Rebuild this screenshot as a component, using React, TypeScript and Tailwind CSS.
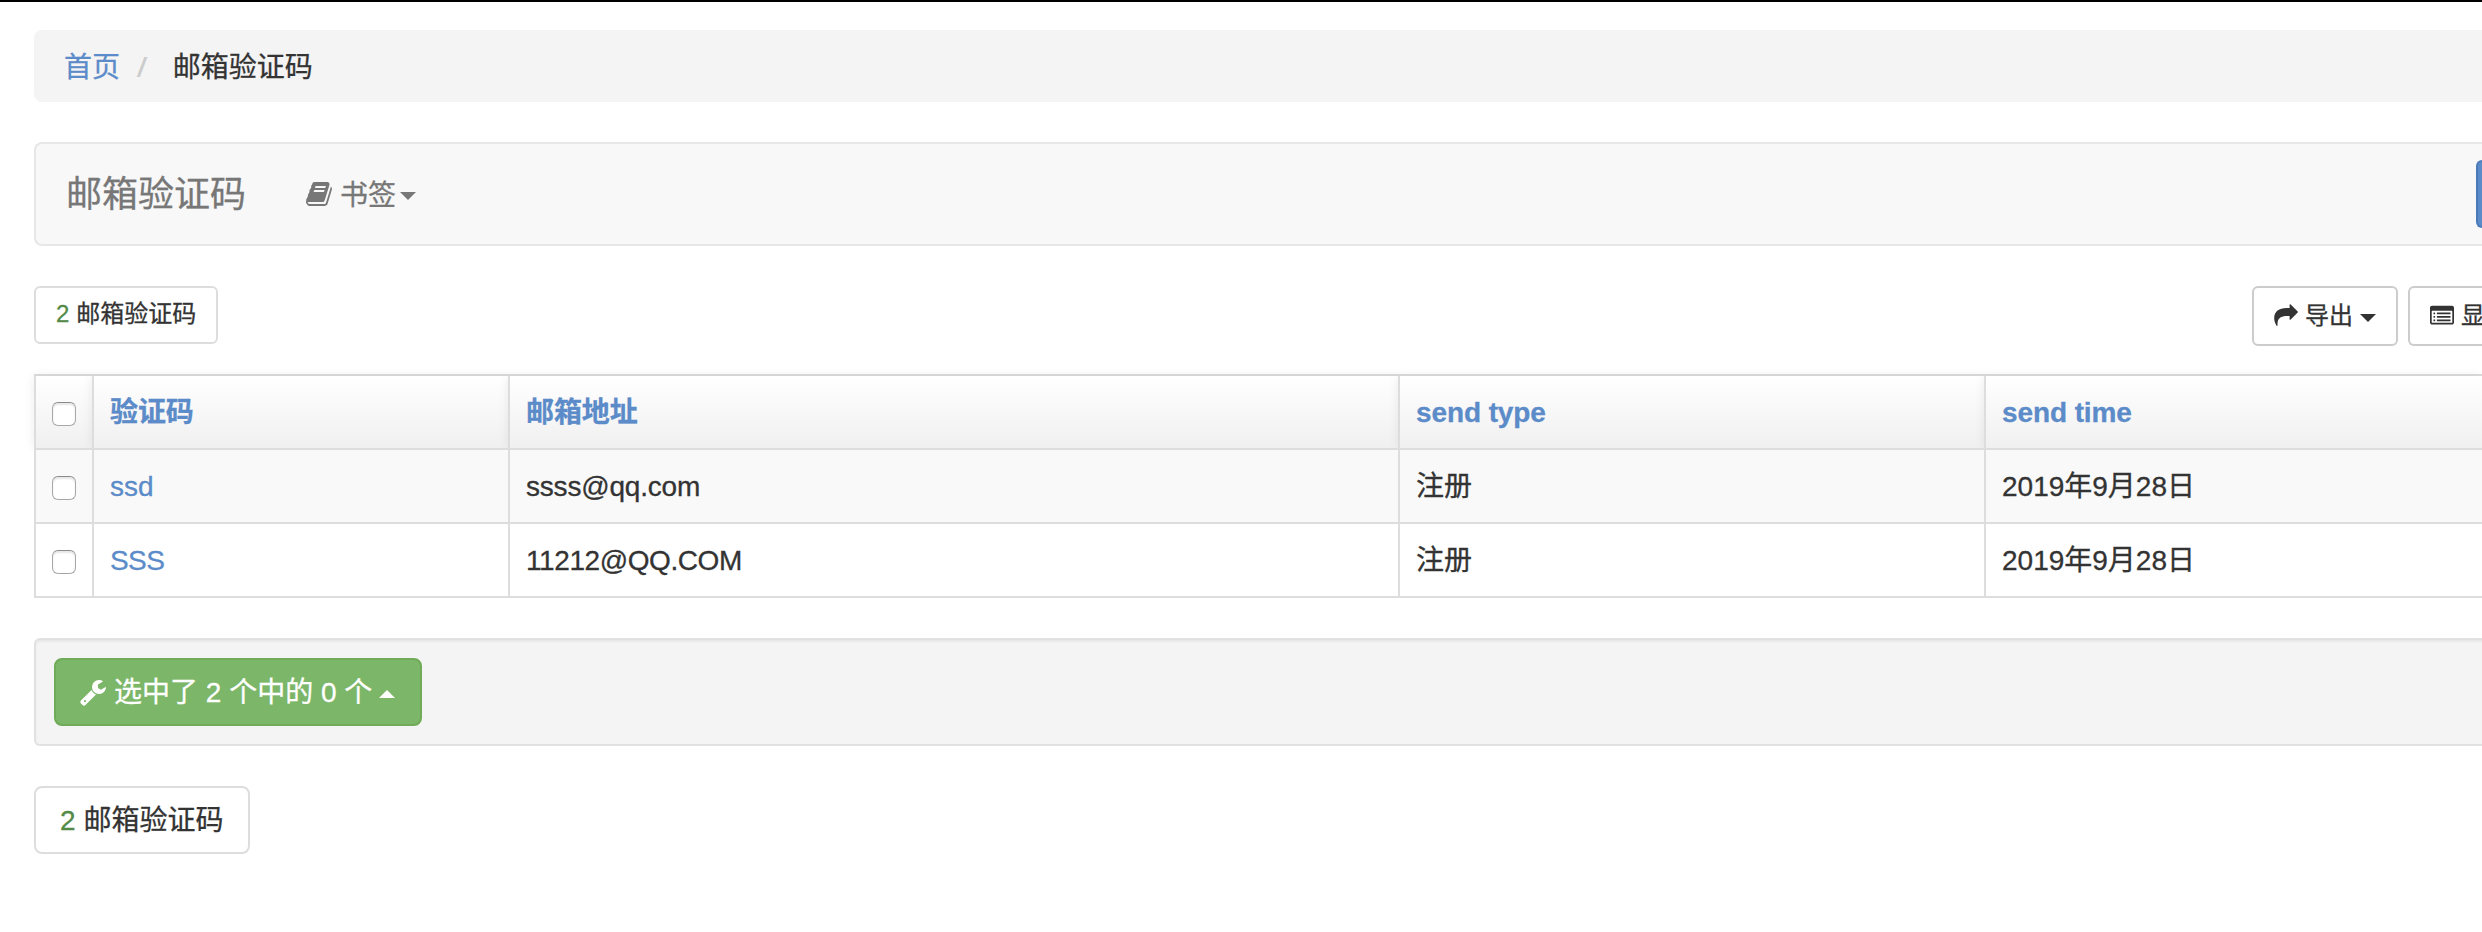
import type { ReactNode } from "react";

const iconPaths = {
  book: "M1639 478q40 57 18 129l-275 906q-19 64-76.5 107.5t-122.5 43.5h-923q-77 0-148.5-53.5t-99.5-131.5q-24-67-2-127 0-4 3-27t4-37q1-8-3-21.5t-3-19.5q2-11 8-21t16.5-23.5 16.5-23.5q23-38 45-91.5t30-91.5q3-10 .5-30t-.5-28q3-11 17-28t17-23q21-36 42-92t25-90q1-9-2.5-32t.5-28q4-13 22-30.5t22-22.5q19-26 42.5-84.5t27.5-96.5q1-8-3-25.5t-2-26.5q2-8 9-18t18-23 17-21q8-12 16.5-30.5t15-35 16-36 19.5-32 26.5-23.5 36-11.5 47.5 5.5l-1 3q38-9 51-9h761q74 0 114 56t18 130l-274 906q-36 119-71.5 153.5t-128.5 34.5h-869q-27 0-38 15-11 16-1 43 24 70 144 70h923q29 0 56-15.5t35-41.5l300-987q7-22 5-57 38 15 59 43zm-1064 2q-4 13 2 22.5t20 9.5h608q13 0 25.5-9.5t16.5-22.5l21-64q4-13-2-22.5t-20-9.5h-608q-13 0-25.5 9.5t-16.5 22.5zm-83 256q-4 13 2 22.5t20 9.5h608q13 0 25.5-9.5t16.5-22.5l21-64q4-13-2-22.5t-20-9.5h-608q-13 0-25.5 9.5t-16.5 22.5z",
  list: "M384 1184v64q0 13-9.5 22.5t-22.5 9.5h-64q-13 0-22.5-9.5t-9.5-22.5v-64q0-13 9.5-22.5t22.5-9.5h64q13 0 22.5 9.5t9.5 22.5zm0-256v64q0 13-9.5 22.5t-22.5 9.5h-64q-13 0-22.5-9.5t-9.5-22.5v-64q0-13 9.5-22.5t22.5-9.5h64q13 0 22.5 9.5t9.5 22.5zm0-256v64q0 13-9.5 22.5t-22.5 9.5h-64q-13 0-22.5-9.5t-9.5-22.5v-64q0-13 9.5-22.5t22.5-9.5h64q13 0 22.5 9.5t9.5 22.5zm1152 512v64q0 13-9.5 22.5t-22.5 9.5h-960q-13 0-22.5-9.5t-9.5-22.5v-64q0-13 9.5-22.5t22.5-9.5h960q13 0 22.5 9.5t9.5 22.5zm0-256v64q0 13-9.5 22.5t-22.5 9.5h-960q-13 0-22.5-9.5t-9.5-22.5v-64q0-13 9.5-22.5t22.5-9.5h960q13 0 22.5 9.5t9.5 22.5zm0-256v64q0 13-9.5 22.5t-22.5 9.5h-960q-13 0-22.5-9.5t-9.5-22.5v-64q0-13 9.5-22.5t22.5-9.5h960q13 0 22.5 9.5t9.5 22.5zm128 704v-832q0-13-9.5-22.5t-22.5-9.5h-1472q-13 0-22.5 9.5t-9.5 22.5v832q0 13 9.5 22.5t22.5 9.5h1472q13 0 22.5-9.5t9.5-22.5zm128-1088v1088q0 66-47 113t-113 47h-1472q-66 0-113-47t-47-113v-1088q0-66 47-113t113-47h1472q66 0 113 47t47 113z",
  wrench: "M448 1472q0-26-19-45t-45-19-45 19-19 45 19 45 45 19 45-19 19-45zm644-420l-682 682q-37 37-90 37-52 0-91-37l-106-108q-38-36-38-90 0-53 38-91l681-681q39 98 114.5 173.5t173.5 114.5zm634-435q0 39-23 106-47 134-164.5 217.5t-258.5 83.5q-185 0-316.5-131.5t-131.5-316.5 131.5-316.5 316.5-131.5q58 0 121.5 16.5t107.5 46.5q16 11 16 28t-16 28l-293 169v224l193 107q5-3 79-48.5t135.5-81 70.5-35.5q15 0 23.5 10t8.5 25z",
};

function Icon({ name, className }: { name: keyof typeof iconPaths; className: string }) {
  return (
    <svg viewBox="0 0 1792 1792" fill="currentColor" className={`shrink-0 overflow-visible ${className}`}>
      <path d={iconPaths[name]} />
    </svg>
  );
}

function ShareIcon() {
  return (
    <svg viewBox="0 0 24 22" fill="currentColor" className="mb-[2px] h-[22px] w-6 shrink-0">
      <path d="M15.6 0.6Q16 -0.2 16.7 0.5L23.7 7.4Q24.2 8 23.7 8.6L16.7 15.5Q16 16.2 15.6 15.4V12C9 11.7 4.3 12.6 3.6 18.5C3.5 19.6 3.5 20.6 3.6 21.5Q3.1 22.3 2.4 21.6C0.9 18.7 0.2 16.6 0.2 14.2C0.2 7.2 5 4.1 12.5 4H15.6Z" />
    </svg>
  );
}

function Caret({ up = false, className = "" }: { up?: boolean; className?: string }) {
  return (
    <svg viewBox="0 0 16 8" fill="currentColor" className={`h-2 w-4 shrink-0 ${className}`}>
      <path d={up ? "M0 8L8 0L16 8Z" : "M0 0H16L8 8Z"} />
    </svg>
  );
}

function Checkbox() {
  return (
    <span
      role="checkbox"
      aria-checked="false"
      className="mt-1 h-6 w-6 rounded-[6px] border border-[#a8a8a8] border-t-[#8c8c8c] bg-white shadow-[inset_0_2px_2px_rgba(0,0,0,0.10)]"
    />
  );
}

const columns = ["w-[58px] justify-center", "w-[416px] pl-4", "w-[890px] pl-4", "w-[586px] pl-4", "flex-1 pl-4"];

function HeadCell({ col, children }: { col: number; children: ReactNode }) {
  return (
    <div
      className={`flex h-full shrink-0 items-center border-l-2 border-[#dddddd] bg-gradient-to-b from-white to-[#f0f0f0] bg-clip-padding font-bold tracking-[-0.1px] text-[#5b8bc8] shadow-[0_0_10px_rgba(0,0,0,0.08)] ${columns[col]}`}
    >
      {children}
    </div>
  );
}

function Cell({ col, link = false, children }: { col: number; link?: boolean; children: ReactNode }) {
  return (
    <div
      className={`flex h-full shrink-0 items-center border-l-2 border-[#dddddd] ${link ? "text-[#5b8bc8]" : ""} ${columns[col]}`}
    >
      {children}
    </div>
  );
}

const rows = [
  { code: "ssd", email: "ssss@qq.com", type: "注册", time: "2019年9月28日", codeTracking: "", emailTracking: "tracking-[-0.2px]" },
  { code: "SSS", email: "11212@QQ.COM", type: "注册", time: "2019年9月28日", codeTracking: "tracking-[-0.6px]", emailTracking: "tracking-[-0.42px]" },
];

export default function App() {
  return (
    <div className="h-[932px] w-full overflow-hidden border-t-2 border-black bg-white pl-[34px] pt-7 font-['Liberation_Sans','Noto_Sans_CJK_SC',sans-serif] text-[28px] leading-10 whitespace-nowrap text-[#333333] [-webkit-text-stroke:0.3px]">
      <nav className="flex h-[72px] items-center rounded-l-lg bg-[#f4f4f4] pt-[3px] pl-[30px]">
        <a className="text-[#5b8bc8]">首页</a>
        <span className="ml-[18px] inline-block scale-x-[1.35] text-[#cccccc] [-webkit-text-stroke:0]">/</span>
        <span className="pl-[27px]">邮箱验证码</span>
      </nav>

      <header className="mt-10 flex h-[104px] items-center rounded-l-lg border-2 border-r-0 border-[#e7e7e7] bg-[#f8f8f8] pl-[30px] text-[#777777]">
        <h1 className="w-[180px] pt-[2px] text-[36px]">邮箱验证码</h1>
        <div className="flex items-center pl-[60px]">
          <Icon name="book" className="h-7 w-7" />
          <span className="pt-[3px] pl-[6px]">书签</span>
          <Caret className="mt-1 ml-1" />
        </div>
        <div className="ml-auto h-[68px] w-[6px] rounded-l-lg border-2 border-r-0 border-[#4a7ab8] bg-[#5b8bc8]" />
      </header>

      <div className="mt-10 flex h-[60px] items-start justify-between text-2xl">
        <div className="flex h-[58px] items-center gap-[7px] rounded-md border-2 border-[#dddddd] px-5 pb-[2px]">
          <span className="text-[#548a47]">2</span>
          <span>邮箱验证码</span>
        </div>
        <div className="flex gap-[10px]">
          <div className="flex h-[60px] w-[146px] items-center rounded-md border-2 border-[#cccccc] pl-5">
            <ShareIcon />
            <span className="pl-[7px]">导出</span>
            <Caret className="mt-1 ml-[7px]" />
          </div>
          <div className="flex h-[60px] w-[74px] items-center overflow-hidden rounded-l-md border-2 border-r-0 border-[#cccccc] pl-5">
            <Icon name="list" className="h-6 w-6" />
            <span className="pl-[7px]">显</span>
          </div>
        </div>
      </div>

      <div className="mt-7 flex flex-col border-b-2 border-[#dddddd]">
        <div className="flex h-[74px] border-t-2 border-[#dddddd]">
          <HeadCell col={0}><Checkbox /></HeadCell>
          <HeadCell col={1}><span className="pt-[2px]">验证码</span></HeadCell>
          <HeadCell col={2}><span className="pt-[2px]">邮箱地址</span></HeadCell>
          <HeadCell col={3}><span className="pt-[2px]">send type</span></HeadCell>
          <HeadCell col={4}><span className="pt-[2px]">send time</span></HeadCell>
        </div>
        {rows.map((row, i) => (
          <div
            key={row.code}
            className={`relative flex h-[74px] border-t-2 border-[#dddddd] ${i % 2 === 0 ? "bg-[#f9f9f9]" : "bg-white"}`}
          >
            <Cell col={0}><Checkbox /></Cell>
            <Cell col={1} link><span className={`pt-[2px] ${row.codeTracking}`}>{row.code}</span></Cell>
            <Cell col={2}><span className={`pt-[2px] ${row.emailTracking}`}>{row.email}</span></Cell>
            <Cell col={3}><span className="pt-[2px]">{row.type}</span></Cell>
            <Cell col={4}><span className="pt-[2px]">{row.time}</span></Cell>
          </div>
        ))}
      </div>

      <div className="mt-10 -mr-2 flex h-[108px] items-center rounded-l-md border-2 border-r-0 border-[#e1e1e1] bg-[#f4f4f4] pl-[18px] shadow-[inset_0_2px_2px_rgba(0,0,0,0.05)]">
        <button className="flex h-[68px] w-[368px] items-center rounded-lg border-2 border-[#6fab58] bg-[#7cb668] pl-[23px] text-white">
          <Icon name="wrench" className="h-7 w-7" />
          <span className="pt-[2px] pl-[7px]">选中了 2 个中的 0 个</span>
          <Caret up className="mt-1 ml-[7px]" />
        </button>
      </div>

      <div className="mt-10 flex">
        <div className="flex h-[68px] items-center gap-2 rounded-lg border-2 border-[#dddddd] px-6 pt-[2px]">
          <span className="text-[#548a47]">2</span>
          <span>邮箱验证码</span>
        </div>
      </div>
    </div>
  );
}
